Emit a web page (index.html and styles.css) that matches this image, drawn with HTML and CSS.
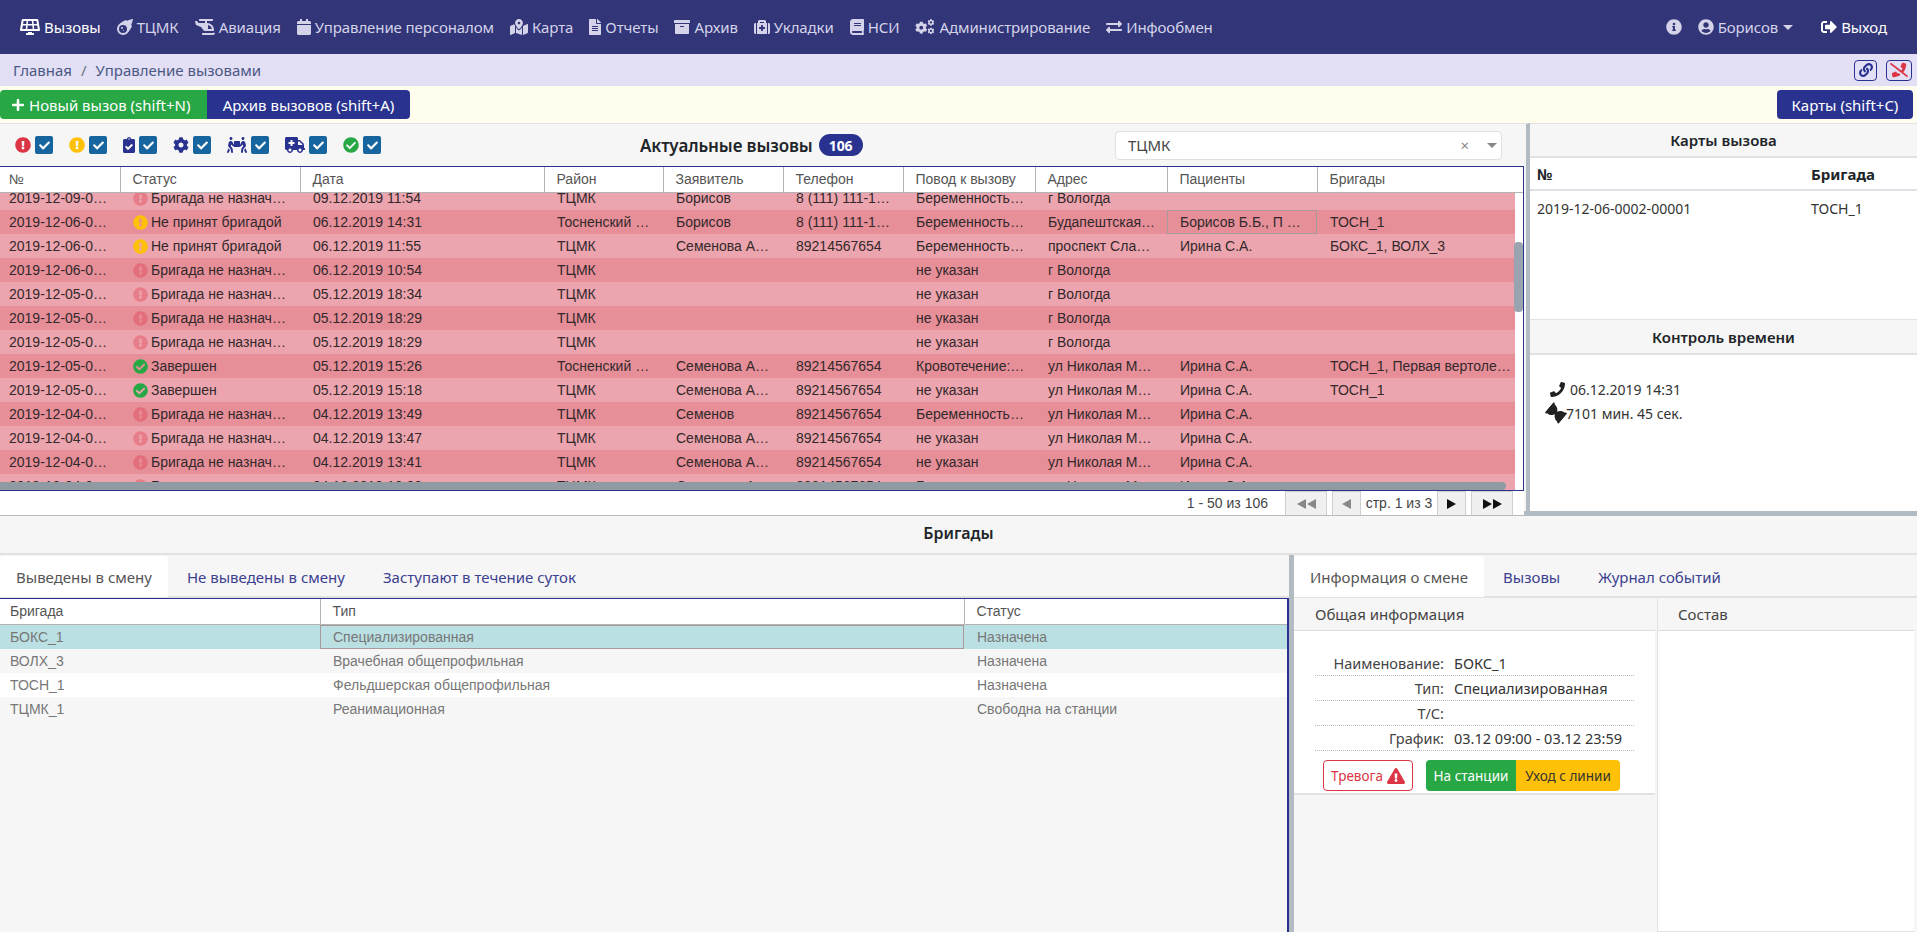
FILE: index.html
```html
<!DOCTYPE html>
<html lang="ru">
<head>
    <meta charset="UTF-8">
    <title>Управление вызовами</title>
    <link rel="stylesheet" href="styles.css">
</head>
<body>
    <svg class="sprite" xmlns="http://www.w3.org/2000/svg">
        <symbol id="i-solar" viewBox="0 0 640 512"><path d="M431.98 448.01l-47.97.05V416h-128v32.21l-47.98.05c-8.82.01-15.97 7.16-15.98 15.99l-.05 31.73c-.01 8.85 7.17 16.03 16.02 16.02l223.96-.26c8.82-.01 15.97-7.16 15.98-15.98l.04-31.73c.01-8.85-7.17-16.03-16.02-16.02zM585.2 26.74C582.58 11.31 568.99 0 553.06 0H86.93C71 0 57.41 11.31 54.79 26.74-3.32 369.16.04 348.08.03 352c-.03 17.32 14.29 32 32.6 32h574.74c18.23 0 32.51-14.56 32.59-31.79.02-4.08 3.35 16.95-54.76-325.47zM259.83 64h120.33l9.77 96H250.06l9.77-96zm-75.17 256H71.09L90.1 208h105.97l-11.41 112zm16.29-160H98.24l16.29-96h96.19l-9.77 96zm32.82 160l11.4-112h149.65l11.4 112H233.77zm195.5-256h96.19l16.29 96H439.04l-9.77-96zm26.06 256l-11.4-112H549.9l19 112H455.33z"/></symbol>
        <symbol id="i-meteor" viewBox="0 0 512 512"><path d="M511.328 20.803c-11.608 38.703-34.307 111.702-61.303 187.701 6.999 2.094 13.404 4 18.607 5.594a16.062 16.062 0 0 1 9.498 22.906c-22.106 42.296-82.69 152.795-142.478 214.404-1 1.094-2 2.5-3 3.5A194.83 194.83 0 1 1 57.085 179.41c1-1 2.406-2 3.499-3 61.6-59.906 171.974-120.405 214.374-142.498a16.058 16.058 0 0 1 22.903 9.5c1.593 5.094 3.499 11.594 5.593 18.594C379.348 35.006 452.431 12.303 491.128.709a16.183 16.183 0 0 1 20.2 20.094zM319.951 320.002A127.98 127.98 0 1 0 191.971 448a127.976 127.976 0 0 0 127.98-127.998zm-127.98-32a31.995 31.995 0 1 1-31.995-32 31.959 31.959 0 0 1 31.995 32zm31.995 80a15.998 15.998 0 1 1-15.998-16 16.05 16.05 0 0 1 15.998 16z"/></symbol>
        <symbol id="i-heli" viewBox="0 0 640 512"><path d="M304 384h272c17.67 0 32-14.33 32-32 0-123.71-100.29-224-224-224V64h176c8.84 0 16-7.16 16-16V16c0-8.84-7.16-16-16-16H144c-8.84 0-16 7.16-16 16v32c0 8.84 7.16 16 16 16h176v64H112L68.8 70.4C65.78 66.37 61.04 64 56 64H16.01C5.6 64-2.04 73.78.49 83.88L32 192l160 64 86.4 115.2A31.992 31.992 0 0 0 304 384zm112-188.49C478.55 208.3 528.03 257.44 540.79 320H416V195.51zm219.37 263.3l-22.15-22.2c-6.25-6.26-16.24-6.1-22.64.01-7.09 6.77-13.84 11.25-24.64 11.25H240c-8.84 0-16 7.18-16 16.03v32.06c0 8.85 7.16 16.03 16 16.03h325.94c14.88 0 35.3-.47 68.45-29.52 7.02-6.14 7.57-17.05.98-23.66z"/></symbol>
        <symbol id="i-calendar" viewBox="0 0 448 512"><path d="M12 192h424c6.6 0 12 5.4 12 12v260c0 26.5-21.5 48-48 48H48c-26.5 0-48-21.5-48-48V204c0-6.6 5.4-12 12-12zm436-44v-36c0-26.5-21.5-48-48-48h-48V12c0-6.6-5.4-12-12-12h-40c-6.6 0-12 5.4-12 12v52H160V12c0-6.6-5.4-12-12-12h-40c-6.6 0-12 5.4-12 12v52H48C21.5 64 0 85.5 0 112v36c0 6.6 5.4 12 12 12h424c6.6 0 12-5.4 12-12z"/></symbol>
        <symbol id="i-map" viewBox="0 0 576 512"><path d="M288 0c-69.59 0-126 56.41-126 126 0 56.26 82.35 158.8 113.9 196.02 6.39 7.54 17.82 7.54 24.2 0C331.65 284.8 414 182.26 414 126 414 56.41 357.59 0 288 0zm0 168c-23.2 0-42-18.8-42-42s18.8-42 42-42 42 18.8 42 42-18.8 42-42 42zM20.12 215.95A32.006 32.006 0 0 0 0 245.66v250.32c0 11.32 11.43 19.06 21.94 14.86L160 448V214.92c-8.84-15.98-16.07-31.54-21.25-46.42L20.12 215.95zM288 359.67c-14.07 0-27.38-6.18-36.51-16.96-19.66-23.2-40.57-49.62-59.49-76.72v182l192 64V266c-18.92 27.09-39.82 53.52-59.49 76.72-9.13 10.77-22.44 16.95-36.51 16.95zm266.06-198.51L416 224v288l139.88-55.95A31.996 31.996 0 0 0 576 426.34V176.02c0-11.32-11.43-19.06-21.94-14.86z"/></symbol>
        <symbol id="i-file" viewBox="0 0 384 512"><path d="M224 136V0H24C10.7 0 0 10.7 0 24v464c0 13.3 10.7 24 24 24h336c13.3 0 24-10.7 24-24V160H248c-13.2 0-24-10.8-24-24zm64 236c0 6.6-5.4 12-12 12H108c-6.6 0-12-5.4-12-12v-8c0-6.6 5.4-12 12-12h168c6.6 0 12 5.4 12 12v8zm0-64c0 6.6-5.4 12-12 12H108c-6.6 0-12-5.4-12-12v-8c0-6.6 5.4-12 12-12h168c6.6 0 12 5.4 12 12v8zm0-72v8c0 6.6-5.4 12-12 12H108c-6.6 0-12-5.4-12-12v-8c0-6.6 5.4-12 12-12h168c6.6 0 12 5.4 12 12zm96-114.1v6.1H256V0h6.1c6.4 0 12.5 2.5 17 7l97.9 98c4.5 4.5 7 10.6 7 16.9z"/></symbol>
        <symbol id="i-archive" viewBox="0 0 512 512"><path d="M32 448c0 17.7 14.3 32 32 32h384c17.7 0 32-14.3 32-32V160H32v288zm160-212c0-6.6 5.4-12 12-12h104c6.6 0 12 5.4 12 12v8c0 6.6-5.4 12-12 12H204c-6.6 0-12-5.4-12-12v-8zM480 32H32C14.3 32 0 46.3 0 64v48c0 8.8 7.2 16 16 16h480c8.8 0 16-7.2 16-16V64c0-17.7-14.3-32-32-32z"/></symbol>
        <symbol id="i-medkit" viewBox="0 0 512 512"><path d="M96 480h320V128h-32V80c0-26.51-21.49-48-48-48H176c-26.51 0-48 21.49-48 48v48H96v352zm96-384h128v32H192V96zm320 80v256c0 26.51-21.49 48-48 48h-16V128h16c26.51 0 48 21.49 48 48zM64 480H48c-26.51 0-48-21.49-48-48V176c0-26.51 21.49-48 48-48h16v352zm288-208v32c0 8.837-7.163 16-16 16h-48v48c0 8.837-7.163 16-16 16h-32c-8.837 0-16-7.163-16-16v-48h-48c-8.837 0-16-7.163-16-16v-32c0-8.837 7.163-16 16-16h48v-48c0-8.837 7.163-16 16-16h32c8.837 0 16 7.163 16 16v48h48c8.837 0 16 7.163 16 16z"/></symbol>
        <symbol id="i-book" viewBox="0 0 448 512"><path d="M448 360V24c0-13.3-10.7-24-24-24H96C43 0 0 43 0 96v320c0 53 43 96 96 96h328c13.3 0 24-10.7 24-24v-16c0-7.5-3.5-14.3-8.9-18.7-4.2-15.4-4.2-59.3 0-74.7 5.4-4.3 8.9-11.1 8.9-18.6zM128 134c0-3.3 2.7-6 6-6h212c3.3 0 6 2.7 6 6v20c0 3.3-2.7 6-6 6H134c-3.3 0-6-2.7-6-6v-20zm0 64c0-3.3 2.7-6 6-6h212c3.3 0 6 2.7 6 6v20c0 3.3-2.7 6-6 6H134c-3.3 0-6-2.7-6-6v-20zm253.4 250H96c-17.7 0-32-14.3-32-32 0-17.6 14.4-32 32-32h285.4c-1.9 17.1-1.9 46.9 0 64z"/></symbol>
        <symbol id="i-cog" viewBox="0 0 512 512"><path d="M487.4 315.7l-42.6-24.6c4.3-23.2 4.3-47 0-70.2l42.6-24.6c4.9-2.8 7.1-8.6 5.5-14-11.1-35.6-30-67.8-54.7-94.6-3.8-4.1-10-5.1-14.8-2.3L380.8 110c-17.9-15.4-38.5-27.3-60.8-35.1V25.8c0-5.6-3.9-10.5-9.4-11.7-36.7-8.2-74.3-7.8-109.2 0-5.5 1.2-9.4 6.1-9.4 11.7V75c-22.2 7.9-42.8 19.8-60.8 35.1L88.7 85.5c-4.9-2.8-11-1.9-14.8 2.3-24.7 26.7-43.6 58.9-54.7 94.6-1.7 5.4.6 11.2 5.5 14L67.3 221c-4.3 23.2-4.3 47 0 70.2l-42.6 24.6c-4.9 2.8-7.1 8.6-5.5 14 11.1 35.6 30 67.8 54.7 94.6 3.8 4.1 10 5.1 14.8 2.3l42.6-24.6c17.9 15.4 38.5 27.3 60.8 35.1v49.2c0 5.6 3.9 10.5 9.4 11.7 36.7 8.2 74.3 7.8 109.2 0 5.5-1.2 9.4-6.1 9.4-11.7v-49.2c22.2-7.9 42.8-19.8 60.8-35.1l42.6 24.6c4.9 2.8 11 1.9 14.8-2.3 24.7-26.7 43.6-58.9 54.7-94.6 1.5-5.5-.7-11.3-5.6-14.1zM256 336c-44.1 0-80-35.9-80-80s35.9-80 80-80 80 35.9 80 80-35.9 80-80 80z"/></symbol>
        <symbol id="i-cogs" viewBox="0 0 640 512"><use href="#i-cog" x="0" y="76" width="400" height="400"/><use href="#i-cog" x="400" y="0" width="220" height="220"/><use href="#i-cog" x="400" y="270" width="220" height="220"/></symbol>
        <symbol id="i-exchange" viewBox="0 0 512 512"><path d="M0 168v-16c0-13.255 10.745-24 24-24h360V80c0-21.367 25.899-32.042 40.971-16.971l80 80c9.372 9.373 9.372 24.569 0 33.941l-80 80C409.956 271.982 384 261.456 384 240v-48H24c-13.255 0-24-10.745-24-24zm488 152H128v-48c0-21.314-25.862-32.08-40.971-16.971l-80 80c-9.372 9.373-9.372 24.569 0 33.941l80 80C102.057 463.997 128 453.437 128 432v-48h360c13.255 0 24-10.745 24-24v-16c0-13.255-10.745-24-24-24z"/></symbol>
        <symbol id="i-info" viewBox="0 0 512 512"><path d="M256 8C119.043 8 8 119.083 8 256c0 136.997 111.043 248 248 248s248-111.003 248-248C504 119.083 392.957 8 256 8zm0 110c23.196 0 42 18.804 42 42s-18.804 42-42 42-42-18.804-42-42 18.804-42 42-42zm56 254c0 6.627-5.373 12-12 12h-88c-6.627 0-12-5.373-12-12v-24c0-6.627 5.373-12 12-12h12v-64h-12c-6.627 0-12-5.373-12-12v-24c0-6.627 5.373-12 12-12h64c6.627 0 12 5.373 12 12v100h12c6.627 0 12 5.373 12 12v24z"/></symbol>
        <symbol id="i-user" viewBox="0 0 496 512"><path d="M248 8C111 8 0 119 0 256s111 248 248 248 248-111 248-248S385 8 248 8zm0 96c48.6 0 88 39.4 88 88s-39.4 88-88 88-88-39.4-88-88 39.4-88 88-88zm0 344c-58.7 0-111.3-26.6-146.5-68.2 18.8-35.4 55.6-59.8 98.5-59.8 2.4 0 4.8.4 7.1 1.1 13 4.2 26.6 6.9 40.9 6.9 14.3 0 28-2.7 40.9-6.9 2.3-.7 4.7-1.1 7.1-1.1 42.9 0 79.7 24.4 98.5 59.8C359.3 421.4 306.7 448 248 448z"/></symbol>
        <symbol id="i-signout" viewBox="0 0 512 512"><path d="M497 273L329 441c-15 15-41 4.5-41-17v-96H152c-13.3 0-24-10.7-24-24v-96c0-13.3 10.7-24 24-24h136V88c0-21.4 25.9-32 41-17l168 168c9.3 9.4 9.3 24.6 0 34zM192 436v-40c0-6.6-5.4-12-12-12H96c-17.7 0-32-14.3-32-32V160c0-17.7 14.3-32 32-32h84c6.6 0 12-5.4 12-12V76c0-6.6-5.4-12-12-12H96c-53 0-96 43-96 96v192c0 53 43 96 96 96h84c6.6 0 12-5.4 12-12z"/></symbol>
        <symbol id="i-link" viewBox="0 0 512 512"><path d="M326.612 185.391c59.747 59.809 58.927 155.698.36 214.59-.11.12-.24.25-.36.37l-67.2 67.2c-59.27 59.27-155.699 59.262-214.96 0-59.27-59.26-59.27-155.7 0-214.96l37.106-37.106c9.84-9.84 26.786-3.3 27.294 10.606.648 17.722 3.826 35.527 9.69 52.721 1.986 5.822.567 12.262-3.783 16.612l-13.087 13.087c-28.026 28.026-28.905 73.66-1.155 101.96 28.024 28.579 74.086 28.749 102.325.51l67.2-67.19c28.191-28.191 28.073-73.757 0-101.83-3.701-3.694-7.429-6.564-10.341-8.569a16.037 16.037 0 0 1-6.947-12.606c-.396-10.567 3.348-21.456 11.698-29.806l21.054-21.055c5.521-5.521 14.182-6.199 20.584-1.731a152.482 152.482 0 0 1 20.522 17.197zM467.547 44.449c-59.261-59.262-155.69-59.27-214.96 0l-67.2 67.2c-.12.12-.25.25-.36.37-58.566 58.892-59.387 154.781.36 214.59a152.454 152.454 0 0 0 20.521 17.196c6.402 4.468 15.064 3.789 20.584-1.731l21.054-21.055c8.35-8.35 12.094-19.239 11.698-29.806a16.037 16.037 0 0 0-6.947-12.606c-2.912-2.005-6.64-4.875-10.341-8.569-28.073-28.073-28.191-73.639 0-101.83l67.2-67.19c28.239-28.239 74.3-28.069 102.325.51 27.75 28.3 26.872 73.934-1.155 101.96l-13.087 13.087c-4.35 4.35-5.769 10.79-3.783 16.612 5.864 17.194 9.042 34.999 9.69 52.721.509 13.906 17.454 20.446 27.294 10.606l37.106-37.106c59.271-59.259 59.271-155.699.001-214.959z"/></symbol>
        <symbol id="i-phone-slash" viewBox="0 0 640 512"><path d="M268.2 381.4l-49.6-60.6c-6.8-8.3-18.2-11.1-28-6.9l-112 48c-10.7 4.6-16.5 16.1-13.9 27.5l24 104c2.5 10.8 12.1 18.6 23.4 18.6 100.7 0 193.7-32.4 269.7-86.9l-80-61.8c-10.9 6.5-22.1 12.7-33.6 18.1zm365.6 76.7L475.1 335.5C537.9 256.4 576 156.9 576 48c0-11.2-7.7-20.9-18.6-23.4l-104-24c-11.3-2.6-22.9 3.3-27.5 13.9l-48 112c-4.2 9.8-1.4 21.3 6.9 28l60.6 49.6c-12.2 26.1-27.9 50.3-46 72.8L45.5 3.4C38.5-2 28.5-.8 23 6.2L3.4 31.4c-5.4 7-4.2 17 2.8 22.4l588.4 454.7c7 5.4 17 4.2 22.5-2.8l19.6-25.3c5.4-6.8 4.1-16.9-2.9-22.3z"/></symbol>
        <symbol id="i-plus" viewBox="0 0 448 512"><path d="M416 208H272V64c0-17.67-14.33-32-32-32h-32c-17.67 0-32 14.33-32 32v144H32c-17.67 0-32 14.33-32 32v32c0 17.67 14.33 32 32 32h144v144c0 17.67 14.33 32 32 32h32c17.67 0 32-14.33 32-32V304h144c17.67 0 32-14.33 32-32v-32c0-17.67-14.33-32-32-32z"/></symbol>
        <symbol id="i-alert" viewBox="0 0 512 512"><path d="M504 256c0 136.997-111.043 248-248 248S8 392.997 8 256C8 119.083 119.043 8 256 8s248 111.083 248 248zm-248 50c-25.405 0-46 20.595-46 46s20.595 46 46 46 46-20.595 46-46-20.595-46-46-46zm-43.673-165.346l7.418 136c.347 6.364 5.609 11.346 11.982 11.346h48.546c6.373 0 11.635-4.982 11.982-11.346l7.418-136c.375-6.874-5.098-12.654-11.982-12.654h-63.383c-6.884 0-12.356 5.78-11.981 12.654z"/></symbol>
        <symbol id="i-ok" viewBox="0 0 512 512"><path d="M504 256c0 136.967-111.033 248-248 248S8 392.967 8 256 119.033 8 256 8s248 111.033 248 248zM227.314 387.314l184-184c6.248-6.248 6.248-16.379 0-22.627l-22.627-22.627c-6.248-6.249-16.379-6.249-22.628 0L216 308.118l-70.059-70.059c-6.248-6.248-16.379-6.248-22.628 0l-22.627 22.627c-6.248 6.248-6.248 16.379 0 22.627l104 104c6.249 6.249 16.379 6.249 22.628.001z"/></symbol>
        <symbol id="i-check" viewBox="0 0 512 512"><path d="M173.898 439.404l-166.4-166.4c-9.997-9.997-9.997-26.206 0-36.204l36.203-36.204c9.997-9.998 26.207-9.998 36.204 0L192 312.69 432.095 72.596c9.997-9.997 26.207-9.997 36.204 0l36.203 36.204c9.997 9.997 9.997 26.206 0 36.204l-294.4 294.401c-9.998 9.997-26.207 9.997-36.204-.001z"/></symbol>
        <symbol id="i-clipboard" viewBox="0 0 384 512"><path d="M336 64h-80c0-35.3-28.7-64-64-64s-64 28.7-64 64H48C21.5 64 0 85.5 0 112v352c0 26.5 21.5 48 48 48h288c26.5 0 48-21.5 48-48V112c0-26.5-21.5-48-48-48zM192 40c13.3 0 24 10.7 24 24s-10.7 24-24 24-24-10.7-24-24 10.7-24 24-24zm121.2 231.8l-143 141.8c-4.7 4.7-12.3 4.6-17-.1l-82.6-83.3c-4.7-4.7-4.6-12.3.1-17L99.1 285c4.7-4.7 12.3-4.6 17 .1l46 46.4 106-105.2c4.7-4.7 12.3-4.6 17 .1l28.2 28.4c4.7 4.8 4.6 12.3-.1 17z"/></symbol>
        <symbol id="i-people" viewBox="0 0 640 512"><path d="M128 96c26.5 0 48-21.5 48-48S154.5 0 128 0 80 21.5 80 48s21.5 48 48 48zm384 0c26.5 0 48-21.5 48-48S538.5 0 512 0s-48 21.5-48 48 21.5 48 48 48zm125.7 372.1l-44-110-41.1 46.4-2 18.2 27.7 69.2c5 12.5 17 20.1 29.7 20.1 4 0 8-.7 11.9-2.3 16.4-6.6 24.4-25.2 17.8-41.6zm-34.2-209.8L585 178.1c-4.6-20-18.6-36.8-37.5-44.9-18.5-8-39-6.7-56.1 3.3-22.7 13.4-39.7 34.5-48.1 59.4L432 229.8 416 240v-96c0-8.8-7.2-16-16-16H240c-8.8 0-16 7.2-16 16v96l-16.1-10.2-11.3-33.9c-8.3-25-25.4-46-48.1-59.4-17.2-10-37.6-11.3-56.1-3.3-18.9 8.1-32.9 24.9-37.5 44.9l-18.4 80.2c-4.6 20 .7 41.2 14.4 56.7l67.2 75.9 10.1 92.6C130 499.8 143.8 512 160 512c1.2 0 2.3-.1 3.5-.2 17.6-1.9 30.2-17.7 28.3-35.3l-10.1-92.8c-1.5-13-6.9-25.1-15.6-35l-43.3-49 17.6-70.3 6.8 20.4c4.1 12.5 11.9 23.4 24.5 32.6l51.1 32.5c4.6 2.9 12.1 4.6 17.2 5h160c5.1-.4 12.6-2.1 17.2-5l51.1-32.5c12.6-9.2 20.4-20 24.5-32.6l6.8-20.4 17.6 70.3-43.3 49c-8.7 9.9-14.1 22-15.6 35l-10.1 92.8c-1.9 17.6 10.8 33.4 28.3 35.3 1.2.1 2.3.2 3.5.2 16.1 0 30-12.1 31.8-28.5l10.1-92.6 67.2-75.9c13.6-15.5 19-36.7 14.4-56.7zM46.3 358.1l-44 110c-6.6 16.4 1.4 35 17.8 41.6 16.8 6.6 35.1-1.7 41.6-17.8l27.7-69.2-2-18.2-41.1-46.4z"/></symbol>
        <symbol id="i-ambulance" viewBox="0 0 640 512"><path d="M624 352h-16V243.9c0-12.7-5.1-24.9-14.1-33.9L494 110.1c-9-9-21.2-14.1-33.9-14.1H416V48c0-26.5-21.5-48-48-48H48C21.5 0 0 21.5 0 48v320c0 26.5 21.5 48 48 48h16c0 53 43 96 96 96s96-43 96-96h128c0 53 43 96 96 96s96-43 96-96h48c8.8 0 16-7.2 16-16v-32c0-8.8-7.2-16-16-16zM160 464c-26.5 0-48-21.5-48-48s21.5-48 48-48 48 21.5 48 48-21.5 48-48 48zm144-248c0 4.4-3.6 8-8 8h-56v56c0 4.4-3.6 8-8 8h-48c-4.4 0-8-3.6-8-8v-56h-56c-4.4 0-8-3.6-8-8v-48c0-4.4 3.6-8 8-8h56v-56c0-4.4 3.6-8 8-8h48c4.4 0 8 3.6 8 8v56h56c4.4 0 8 3.6 8 8v48zm176 248c-26.5 0-48-21.5-48-48s21.5-48 48-48 48 21.5 48 48-21.5 48-48 48zm80-208H416V144h44.1l99.9 99.9V256z"/></symbol>
        <symbol id="i-phone" viewBox="0 0 512 512"><path d="M493.4 24.6l-104-24c-11.3-2.6-22.9 3.3-27.5 13.9l-48 112c-4.2 9.8-1.4 21.3 6.9 28l60.6 49.6c-36 76.7-98.9 140.5-177.2 177.2l-49.6-60.6c-6.8-8.3-18.2-11.1-28-6.9l-112 48C3.9 366.5-2 378.1.6 389.4l24 104C27.1 504.2 36.7 512 48 512c256.1 0 464-207.5 464-464 0-11.2-7.7-20.9-18.6-23.4z"/></symbol>
        <symbol id="i-hourglass" viewBox="0 0 384 512"><path d="M360 64c13.255 0 24-10.745 24-24V24c0-13.255-10.745-24-24-24H24C10.745 0 0 10.745 0 24v16c0 13.255 10.745 24 24 24 0 90.965 51.016 167.734 120.842 192C75.016 280.266 24 357.035 24 448c-13.255 0-24 10.745-24 24v16c0 13.255 10.745 24 24 24h336c13.255 0 24-10.745 24-24v-16c0-13.255-10.745-24-24-24 0-90.965-51.016-167.734-120.842-192C308.984 231.734 360 154.965 360 64z"/></symbol>
        <symbol id="i-warn" viewBox="0 0 576 512"><path d="M569.517 440.013C587.975 472.007 564.806 512 527.94 512H48.054c-36.937 0-59.999-40.055-41.577-71.987L246.423 23.985c18.467-32.009 64.72-31.951 83.154 0l239.94 416.028zM288 354c-25.405 0-46 20.595-46 46s20.595 46 46 46 46-20.595 46-46-20.595-46-46-46zm-43.673-165.346l7.418 136c.347 6.364 5.609 11.346 11.982 11.346h48.546c6.373 0 11.635-4.982 11.982-11.346l7.418-136c.375-6.874-5.098-12.654-11.982-12.654h-63.383c-6.884 0-12.356 5.78-11.981 12.654z"/></symbol>
    </svg>

    <nav class="navbar">
        <a class="nav-link active"><svg class="ic w20"><use href="#i-solar"/></svg>Вызовы</a>
        <a class="nav-link"><svg class="ic"><use href="#i-meteor"/></svg>ТЦМК</a>
        <a class="nav-link"><svg class="ic w20"><use href="#i-heli"/></svg>Авиация</a>
        <a class="nav-link"><svg class="ic w14"><use href="#i-calendar"/></svg>Управление персоналом</a>
        <a class="nav-link"><svg class="ic w18"><use href="#i-map"/></svg>Карта</a>
        <a class="nav-link"><svg class="ic w12"><use href="#i-file"/></svg>Отчеты</a>
        <a class="nav-link"><svg class="ic"><use href="#i-archive"/></svg>Архив</a>
        <a class="nav-link"><svg class="ic"><use href="#i-medkit"/></svg>Укладки</a>
        <a class="nav-link"><svg class="ic w14"><use href="#i-book"/></svg>НСИ</a>
        <a class="nav-link"><svg class="ic w20"><use href="#i-cogs"/></svg>Администрирование</a>
        <a class="nav-link"><svg class="ic"><use href="#i-exchange"/></svg>Инфообмен</a>
        <span class="nav-space"></span>
        <a class="nav-link"><svg class="ic"><use href="#i-info"/></svg></a>
        <a class="nav-link nav-user"><svg class="ic w16"><use href="#i-user"/></svg>Борисов<i class="caret"></i></a>
        <a class="nav-link nav-exit"><svg class="ic"><use href="#i-signout"/></svg>Выход</a>
    </nav>

    <div class="crumbs">
        <a>Главная</a><span class="crumb-sep">/</span><a>Управление вызовами</a>
        <span class="crumb-tools">
            <button class="tool-btn"><svg class="ic w14"><use href="#i-link"/></svg></button>
            <button class="tool-btn red"><svg class="ic w18"><use href="#i-phone-slash"/></svg></button>
        </span>
    </div>

    <div class="toolbar">
        <button class="btn btn-green"><svg class="ic w12"><use href="#i-plus"/></svg>Новый вызов (shift+N)</button>
        <button class="btn btn-navy">Архив вызовов (shift+A)</button>
        <button class="btn btn-navy btn-cards">Карты (shift+C)</button>
    </div>

    <section class="top-split">
        <div class="calls">
            <div class="filter-row">
                <div class="filters">
                    <span class="filter"><svg class="ic c-red"><use href="#i-alert"/></svg><i class="box"><svg><use href="#i-check"/></svg></i></span>
                    <span class="filter"><svg class="ic c-yellow"><use href="#i-alert"/></svg><i class="box"><svg><use href="#i-check"/></svg></i></span>
                    <span class="filter"><svg class="ic w12 c-navy"><use href="#i-clipboard"/></svg><i class="box"><svg><use href="#i-check"/></svg></i></span>
                    <span class="filter"><svg class="ic c-navy"><use href="#i-cog"/></svg><i class="box"><svg><use href="#i-check"/></svg></i></span>
                    <span class="filter"><svg class="ic w20 c-navy"><use href="#i-people"/></svg><i class="box"><svg><use href="#i-check"/></svg></i></span>
                    <span class="filter"><svg class="ic w20 c-navy"><use href="#i-ambulance"/></svg><i class="box"><svg><use href="#i-check"/></svg></i></span>
                    <span class="filter"><svg class="ic c-green"><use href="#i-ok"/></svg><i class="box"><svg><use href="#i-check"/></svg></i></span>
                </div>
                <div class="calls-title">Актуальные вызовы <span class="badge">106</span></div>
                <div class="select">ТЦМК<span class="select-x">×</span><i class="select-arrow"></i></div>
            </div>

            <div class="grid grid-calls">
                <table class="grid-head">
                    <colgroup><col class="c1"><col class="c2"><col class="c3"><col class="c4"><col class="c5"><col class="c6"><col class="c7"><col class="c8"><col class="c9"><col></colgroup>
                    <tr><th>№</th><th>Статус</th><th>Дата</th><th>Район</th><th>Заявитель</th><th>Телефон</th><th>Повод к вызову</th><th>Адрес</th><th>Пациенты</th><th>Бригады</th></tr>
                </table>
                <div class="grid-view">
                    <table class="grid-rows calls-rows">
                        <colgroup><col class="c1"><col class="c2"><col class="c3"><col class="c4"><col class="c5"><col class="c6"><col class="c7"><col class="c8"><col class="c9"><col></colgroup>
                        <tr><td>2019-12-09-0…</td><td><svg class="ic st c-red"><use href="#i-alert"/></svg>Бригада не назнач…</td><td>09.12.2019 11:54</td><td>ТЦМК</td><td>Борисов</td><td>8 (111) 111-1…</td><td>Беременность…</td><td>г Вологда</td><td></td><td></td></tr>
                        <tr><td>2019-12-06-0…</td><td><svg class="ic st c-yellow"><use href="#i-alert"/></svg>Не принят бригадой</td><td>06.12.2019 14:31</td><td>Тосненский …</td><td>Борисов</td><td>8 (111) 111-1…</td><td>Беременность…</td><td>Будапештская…</td><td class="cell-focus">Борисов Б.Б., П …</td><td>ТОСН_1</td></tr>
                        <tr><td>2019-12-06-0…</td><td><svg class="ic st c-yellow"><use href="#i-alert"/></svg>Не принят бригадой</td><td>06.12.2019 11:55</td><td>ТЦМК</td><td>Семенова А…</td><td>89214567654</td><td>Беременность…</td><td>проспект Сла…</td><td>Ирина С.А.</td><td>БОКС_1, ВОЛХ_3</td></tr>
                        <tr><td>2019-12-06-0…</td><td><svg class="ic st c-red"><use href="#i-alert"/></svg>Бригада не назнач…</td><td>06.12.2019 10:54</td><td>ТЦМК</td><td></td><td></td><td>не указан</td><td>г Вологда</td><td></td><td></td></tr>
                        <tr><td>2019-12-05-0…</td><td><svg class="ic st c-red"><use href="#i-alert"/></svg>Бригада не назнач…</td><td>05.12.2019 18:34</td><td>ТЦМК</td><td></td><td></td><td>не указан</td><td>г Вологда</td><td></td><td></td></tr>
                        <tr><td>2019-12-05-0…</td><td><svg class="ic st c-red"><use href="#i-alert"/></svg>Бригада не назнач…</td><td>05.12.2019 18:29</td><td>ТЦМК</td><td></td><td></td><td>не указан</td><td>г Вологда</td><td></td><td></td></tr>
                        <tr><td>2019-12-05-0…</td><td><svg class="ic st c-red"><use href="#i-alert"/></svg>Бригада не назнач…</td><td>05.12.2019 18:29</td><td>ТЦМК</td><td></td><td></td><td>не указан</td><td>г Вологда</td><td></td><td></td></tr>
                        <tr><td>2019-12-05-0…</td><td><svg class="ic st c-green"><use href="#i-ok"/></svg>Завершен</td><td>05.12.2019 15:26</td><td>Тосненский …</td><td>Семенова А…</td><td>89214567654</td><td>Кровотечение:…</td><td>ул Николая М…</td><td>Ирина С.А.</td><td>ТОСН_1, Первая вертоле…</td></tr>
                        <tr><td>2019-12-05-0…</td><td><svg class="ic st c-green"><use href="#i-ok"/></svg>Завершен</td><td>05.12.2019 15:18</td><td>ТЦМК</td><td>Семенова А…</td><td>89214567654</td><td>не указан</td><td>ул Николая М…</td><td>Ирина С.А.</td><td>ТОСН_1</td></tr>
                        <tr><td>2019-12-04-0…</td><td><svg class="ic st c-red"><use href="#i-alert"/></svg>Бригада не назнач…</td><td>04.12.2019 13:49</td><td>ТЦМК</td><td>Семенов</td><td>89214567654</td><td>Беременность…</td><td>ул Николая М…</td><td>Ирина С.А.</td><td></td></tr>
                        <tr><td>2019-12-04-0…</td><td><svg class="ic st c-red"><use href="#i-alert"/></svg>Бригада не назнач…</td><td>04.12.2019 13:47</td><td>ТЦМК</td><td>Семенова А…</td><td>89214567654</td><td>не указан</td><td>ул Николая М…</td><td>Ирина С.А.</td><td></td></tr>
                        <tr><td>2019-12-04-0…</td><td><svg class="ic st c-red"><use href="#i-alert"/></svg>Бригада не назнач…</td><td>04.12.2019 13:41</td><td>ТЦМК</td><td>Семенова А…</td><td>89214567654</td><td>не указан</td><td>ул Николая М…</td><td>Ирина С.А.</td><td></td></tr>
                        <tr><td>2019-12-04-0…</td><td><svg class="ic st c-red"><use href="#i-alert"/></svg>Бригада не назнач…</td><td>04.12.2019 10:00</td><td>ТЦМК</td><td>Семенова А…</td><td>89214567654</td><td>Беременность…</td><td>ул Николая М…</td><td>Ирина С.А.</td><td></td></tr>
                    </table>
                    <div class="scroll-v"></div>
                    <div class="scroll-h"></div>
                </div>
            </div>

            <div class="pager">
                <span class="pager-count">1 - 50 из 106</span>
                <span class="pg wide"><i class="tri left off"></i><i class="tri left off"></i></span>
                <span class="pg"><i class="tri left off"></i></span>
                <span class="pg-input">стр. 1 из 3</span>
                <span class="pg"><i class="tri right"></i></span>
                <span class="pg wide"><i class="tri right"></i><i class="tri right"></i></span>
            </div>
        </div>

        <aside class="side">
            <h3 class="side-title">Карты вызова</h3>
            <div class="cards-head"><b>№</b><b>Бригада</b></div>
            <div class="cards-row"><span>2019-12-06-0002-00001</span><span>ТОСН_1</span></div>
            <h3 class="side-title time-title">Контроль времени</h3>
            <div class="time-list">
                <div class="time-item"><svg class="ic phone"><use href="#i-phone"/></svg>06.12.2019 14:31</div>
                <div class="time-item"><svg class="ic hourglass"><use href="#i-hourglass"/></svg>7101 мин. 45 сек.</div>
            </div>
        </aside>
    </section>

    <section class="bottom">
        <h3 class="bottom-title">Бригады</h3>
        <div class="bottom-split">
            <div class="crews">
                <div class="tabs">
                    <a class="tab active">Выведены в смену</a>
                    <a class="tab">Не выведены в смену</a>
                    <a class="tab">Заступают в течение суток</a>
                </div>
                <div class="grid grid-crews">
                    <table class="grid-head">
                        <colgroup><col class="k1"><col class="k2"><col></colgroup>
                        <tr><th>Бригада</th><th>Тип</th><th>Статус</th></tr>
                    </table>
                    <table class="grid-rows crew-rows">
                        <colgroup><col class="k1"><col class="k2"><col></colgroup>
                        <tr class="selected"><td>БОКС_1</td><td class="cell-focus">Специализированная</td><td>Назначена</td></tr>
                        <tr><td>ВОЛХ_3</td><td>Врачебная общепрофильная</td><td>Назначена</td></tr>
                        <tr><td>ТОСН_1</td><td>Фельдшерская общепрофильная</td><td>Назначена</td></tr>
                        <tr><td>ТЦМК_1</td><td>Реанимационная</td><td>Свободна на станции</td></tr>
                    </table>
                </div>
            </div>

            <div class="shift">
                <div class="tabs">
                    <a class="tab active">Информация о смене</a>
                    <a class="tab">Вызовы</a>
                    <a class="tab">Журнал событий</a>
                </div>
                <div class="shift-cols">
                    <div class="shift-info">
                        <div class="panel-head">Общая информация</div>
                        <div class="panel-body">
                            <div class="info-row"><span class="info-label">Наименование:</span><span class="info-value">БОКС_1</span></div>
                            <div class="info-row"><span class="info-label">Тип:</span><span class="info-value">Специализированная</span></div>
                            <div class="info-row"><span class="info-label">Т/С:</span><span class="info-value"></span></div>
                            <div class="info-row"><span class="info-label">График:</span><span class="info-value">03.12 09:00 - 03.12 23:59</span></div>
                            <div class="info-actions">
                                <button class="btn-alarm">Тревога <svg class="ic w18"><use href="#i-warn"/></svg></button>
                                <span class="btn-pair"><button class="pair-green">На станции</button><button class="pair-yellow">Уход с линии</button></span>
                            </div>
                        </div>
                    </div>
                    <div class="shift-staff">
                        <div class="panel-head">Состав</div>
                    </div>
                </div>
            </div>
        </div>
    </section>
</body>
</html>
```

FILE: styles.css
```css
* {
    box-sizing: border-box;
}

html, body {
    height: 100%;
}

body {
    margin: 0 1px 0 0;
    height: 932px;
    overflow: hidden;
    display: flex;
    flex-direction: column;
    font-family: "Noto Sans", "Open Sans", sans-serif;
    font-size: 15px;
    color: #212529;
    background: #fff;
}

.sprite {
    display: none;
}

.ic {
    display: inline-block;
    width: 16px;
    height: 16px;
    fill: currentColor;
    flex: none;
}

.ic.w12 { width: 12px; }
.ic.w14 { width: 14px; }
.ic.w16 { width: 16px; }
.ic.w18 { width: 18px; }
.ic.w20 { width: 20px; }

.c-red { color: #dc3545; }
.c-yellow { color: #ffc107; }
.c-green { color: #28a745; }
.c-navy { color: #29338f; }

/* top menu */
.navbar {
    height: 54px;
    flex: none;
    display: flex;
    align-items: center;
    padding: 0 12px;
    background: #323577;
}

.nav-link {
    display: flex;
    align-items: center;
    gap: 4px;
    padding: 0 8px;
    font-size: 15px;
    letter-spacing: -0.1px;
    color: #d4d3ea;
    white-space: nowrap;
}

.nav-link.active {
    color: #fff;
}

.nav-space {
    flex: 1;
}

.nav-user {
    margin-right: 12px;
}

.nav-exit {
    color: #fff;
    margin-right: 10px;
}

.caret {
    width: 0;
    height: 0;
    margin-left: 1px;
    border-left: 5px solid transparent;
    border-right: 5px solid transparent;
    border-top: 5px solid currentColor;
}

/* breadcrumb */
.crumbs {
    height: 32px;
    flex: none;
    display: flex;
    align-items: center;
    padding-left: 13px;
    background: #e3e0f6;
    font-size: 15px;
    color: #4b5884;
}

.crumb-sep {
    margin: 0 9px;
    color: #6c757d;
}

.crumb-tools {
    margin-left: auto;
    display: flex;
    gap: 9px;
    margin-right: 5px;
}

.tool-btn {
    width: 23px;
    height: 21px;
    padding: 0;
    display: flex;
    align-items: center;
    justify-content: center;
    background: transparent;
    border: 1px solid #29338f;
    border-radius: 4px;
    color: #29338f;
}

.tool-btn.red {
    width: 26px;
    color: #dc3545;
}

/* button strip */
.toolbar {
    height: 37px;
    flex: none;
    display: flex;
    padding-top: 4px;
    background: #fffdee;
}

.btn {
    height: 29px;
    padding: 0 12px;
    display: flex;
    align-items: center;
    gap: 5px;
    border: none;
    font: inherit;
    color: #fff;
    white-space: nowrap;
}

.btn-green {
    width: 207px;
    background: #28a745;
    border-radius: 4px 0 0 4px;
}

.btn-navy {
    background: #29338f;
    width: 203px;
    justify-content: center;
    border-radius: 0 4px 4px 0;
}

.btn-cards {
    margin-left: auto;
    margin-right: 4px;
    width: 136px;
    border-radius: 4px;
}

/* calls + side panel */
.top-split {
    height: 393px;
    flex: none;
    display: flex;
    border-bottom: 5px solid #b3bbc2;
}

.calls {
    flex: 1;
    min-width: 0;
    display: flex;
    flex-direction: column;
    background: #f6f6f6;
    border-top: 1px solid #e2e2e2;
    border-right: 4px solid #b3bbc2;
}

.filter-row {
    height: 42px;
    flex: none;
    display: flex;
    align-items: center;
}

.filters {
    flex: 0 0 640px;
    display: flex;
    align-items: center;
    gap: 16px;
    padding-left: 15px;
}

.filter {
    display: flex;
    align-items: center;
    gap: 4px;
}

.box {
    width: 18px;
    height: 18px;
    display: flex;
    align-items: center;
    justify-content: center;
    border-radius: 2px;
    background: #17659f;
}

.box svg {
    width: 11px;
    height: 11px;
    fill: #fff;
}

.calls-title {
    flex: 1;
    display: flex;
    align-items: center;
    gap: 6px;
    font-size: 17px;
    font-weight: 600;
    letter-spacing: -0.1px;
}

.badge {
    width: 44px;
    height: 22px;
    display: flex;
    align-items: center;
    justify-content: center;
    border-radius: 11px;
    background: #29338f;
    color: #fff;
    font-size: 14px;
    font-weight: 700;
}

.select {
    position: relative;
    width: 387px;
    height: 29px;
    margin-right: 24px;
    padding-left: 12px;
    display: flex;
    align-items: center;
    background: #fff;
    border: 1px solid #e0e0e0;
    border-radius: 4px;
    color: #444;
}

.select-x {
    position: absolute;
    right: 32px;
    color: #888;
}

.select-arrow {
    position: absolute;
    right: 4px;
    border-left: 5px solid transparent;
    border-right: 5px solid transparent;
    border-top: 5px solid #888;
}

/* data grids */
.grid {
    display: flex;
    flex-direction: column;
    background: #fff;
    font-family: "Liberation Sans", Arial, sans-serif;
    font-size: 14px;
}

.grid table {
    width: 100%;
    table-layout: fixed;
    border-collapse: collapse;
}

.grid-calls {
    height: 325px;
    margin-right: 2px;
    border-top: 1px solid #29338f;
    border-right: 1px solid #29338f;
    border-bottom: 1px solid #29338f;
}

.c1 { width: 120px; }
.c2 { width: 180px; }
.c3 { width: 244px; }
.c4 { width: 119px; }
.c5 { width: 120px; }
.c6 { width: 120px; }
.c7 { width: 132px; }
.c8 { width: 132px; }
.c9 { width: 150px; }

.k1 { width: 320px; }
.k2 { width: 644px; }

.grid-head {
    flex: none;
}

.grid-head th {
    height: 25px;
    padding: 0 0 0 12px;
    text-align: left;
    font-weight: 400;
    color: #555;
    border-left: 1px solid #b4b4b4;
    border-bottom: 1px solid #b4b4b4;
}

.grid-head th:first-child {
    padding-left: 9px;
    border-left: none;
}

.grid-view {
    position: relative;
    flex: 1;
    overflow: hidden;
}

.grid-rows td {
    height: 24px;
    padding: 0 0 0 13px;
    white-space: nowrap;
    overflow: hidden;
}

.grid-rows td:first-child {
    padding-left: 9px;
}

.calls-rows {
    margin-top: -7px;
    color: #33282a;
}

.grid-view .calls-rows {
    width: 1515px;
}

.calls-rows tr:nth-child(odd) {
    background: #eca5ae;
}

.calls-rows tr:nth-child(even) {
    background: #e68f99;
}

.ic.st {
    width: 15px;
    height: 15px;
    margin-right: 3px;
    vertical-align: -3px;
}

.ic.st.c-red {
    opacity: 0.35;
}

.cell-focus {
    box-shadow: inset 0 0 0 1px #a89a9a;
}

.scroll-v {
    position: absolute;
    top: 49px;
    right: 0;
    width: 9px;
    height: 70px;
    border-radius: 4px;
    background: #9aa4b0;
}

.scroll-h {
    position: absolute;
    left: 0;
    bottom: 0;
    width: 1506px;
    height: 8px;
    border-radius: 0 4px 4px 0;
    background: #909aa3;
}

/* pager */
.pager {
    flex: 1;
    display: flex;
    align-items: flex-end;
    margin-right: 2px;
    padding-right: 11px;
    justify-content: flex-end;
    background: #fff;
    font-family: "Liberation Sans", Arial, sans-serif;
    font-size: 14px;
    color: #444;
}

.pager-count {
    margin-right: 17px;
    align-self: center;
}

.pg {
    width: 29px;
    height: 24px;
    display: flex;
    align-items: center;
    justify-content: center;
    gap: 1px;
    background: #f0f0f0;
    border: 1px solid #d0d0d0;
    border-bottom: none;
}

.pg.wide {
    width: 42px;
}

.pager .pg + .pg {
    margin-left: 5px;
}

.pg-input {
    width: 76px;
    text-align: center;
    align-self: center;
}

.tri {
    width: 0;
    height: 0;
    border-top: 5px solid transparent;
    border-bottom: 5px solid transparent;
}

.tri.left {
    border-right: 9px solid #111;
}

.tri.right {
    border-left: 9px solid #111;
}

.tri.off {
    border-right-color: #888;
}

/* side panel */
.side {
    width: 387px;
    flex: none;
    font-size: 14px;
    background: #fff;
}

.side-title {
    height: 35px;
    margin: 0;
    display: flex;
    align-items: center;
    justify-content: center;
    font-size: 15px;
    font-weight: 600;
    background: #f6f6f6;
    border-top: 1px solid #e2e2e2;
    border-bottom: 2px solid #e2e2e2;
}

.cards-head {
    height: 33px;
    display: flex;
    align-items: center;
    border-bottom: 2px solid #dee2e6;
    padding-left: 7px;
    font-size: 15px;
}

.cards-head b:first-child,
.cards-row span:first-child {
    width: 274px;
    flex: none;
}

.cards-row {
    height: 128px;
    padding: 6px 0 0 7px;
    display: flex;
    line-height: 24px;
    color: #333;
}

.time-title {
    height: 36px;
}

.time-list {
    padding: 22px 0 0 17px;
    color: #333;
}

.time-item {
    height: 24px;
    display: flex;
    align-items: center;
}

.ic.phone {
    width: 15px;
    height: 15px;
    margin: 0 5px 0 3px;
    color: #222;
}

.ic.hourglass {
    width: 18px;
    height: 18px;
    margin-right: 1px;
    color: #222;
    transform: rotate(-50deg);
}

/* crews */
.bottom {
    flex: 1;
    min-height: 0;
    display: flex;
    flex-direction: column;
    background: #f6f6f6;
}

.bottom-title {
    height: 39px;
    flex: none;
    margin: 0;
    padding-bottom: 4px;
    display: flex;
    align-items: center;
    justify-content: center;
    font-size: 16px;
    font-weight: 600;
    border-bottom: 2px solid #e2e2e2;
}

.bottom-split {
    flex: 1;
    min-height: 0;
    display: flex;
}

.crews {
    width: 1289px;
    flex: none;
    display: flex;
    flex-direction: column;
}

.tabs {
    height: 43px;
    flex: none;
    display: flex;
    align-items: flex-end;
    border-bottom: 2px solid #e2e2e2;
}

.tab {
    height: 41px;
    margin-bottom: -1px;
    padding: 0 14px 0 13px;
    display: flex;
    align-items: center;
    font-size: 15px;
    color: #3c4190;
}

.tab + .tab {
    padding: 0 19px;
}

.tab.active {
    background: #fff;
    color: #555;
    border-radius: 4px 4px 0 0;
    padding: 0 16px;
}

.grid-crews {
    flex: 1;
    background: #f6f6f6;
    border-top: 1px solid #29338f;
    border-right: 2px solid #29338f;
    color: #777;
}

.grid-crews .grid-head {
    background: #fff;
}

.crew-rows tr:nth-child(odd) {
    background: #fff;
}

.crew-rows tr:nth-child(even) {
    background: #f6f6f6;
}

.crew-rows tr.selected {
    background: #bae0e3;
}

.grid-crews .grid-rows td:first-child {
    padding-left: 10px;
}

.grid-crews .grid-head th:first-child {
    padding-left: 10px;
}

/* shift details */
.shift {
    flex: 1;
    min-width: 0;
    display: flex;
    flex-direction: column;
    border-left: 5px solid #b3bbc2;
}

.shift-cols {
    flex: 1;
    display: flex;
    gap: 2px;
    min-height: 0;
}

.shift-info {
    width: 361px;
    flex: none;
}

.shift-staff {
    flex: 1;
    margin-right: 3px;
    background: #fff;
    border-bottom: 1px solid #e2e2e2;
    border-left: 1px solid #e2e2e2;
}

.panel-head {
    height: 33px;
    padding-left: 21px;
    display: flex;
    align-items: center;
    background: #f6f6f6;
    border-bottom: 1px solid #dcdcdc;
    color: #444;
}

.shift-staff .panel-head {
    padding-left: 20px;
}

.panel-body {
    padding: 20px 21px 2px;
    background: #fff;
    border-bottom: 2px solid #e2e2e2;
    font-size: 14.5px;
}

.info-row {
    min-height: 25px;
    display: flex;
    align-items: flex-end;
    border-bottom: 1px dotted #b8b8b8;
    line-height: 24px;
}

.info-label {
    width: 129px;
    flex: none;
    text-align: right;
    color: #444;
}

.info-value {
    padding-left: 10px;
    color: #333;
}

.info-actions {
    display: flex;
    gap: 13px;
    margin: 9px 0 0 8px;
}

.info-actions button {
    height: 31px;
    font: inherit;
    font-size: 13.5px;
    border: none;
    padding: 0;
}

.btn-alarm.btn-alarm {
    width: 90px;
    display: flex;
    align-items: center;
    justify-content: center;
    gap: 4px;
    background: #fff;
    border: 1px solid #dc3545;
    border-radius: 4px;
    color: #dc3545;
}

.btn-pair {
    display: flex;
}

.pair-green.pair-green {
    width: 90px;
    background: #28a745;
    color: #fff;
    border-radius: 4px 0 0 4px;
}

.pair-yellow.pair-yellow {
    width: 104px;
    background: #ffc107;
    color: #333;
    border-radius: 0 4px 4px 0;
}
```
